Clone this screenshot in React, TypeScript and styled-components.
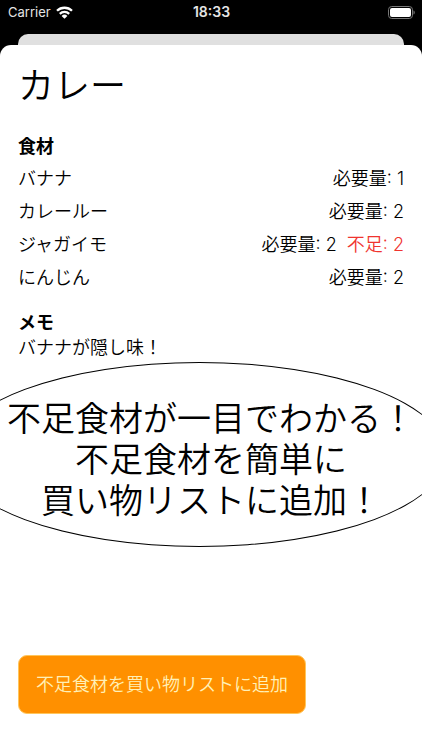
import React from "react";
import styled, { createGlobalStyle } from "styled-components";

const GlobalStyle = createGlobalStyle`
  *, *::before, *::after { box-sizing: border-box; }
  body {
    margin: 0;
    background: #000;
    color: #000;
    font-family: Inter, "Noto Sans CJK JP", sans-serif;
    font-size: 18px;
    font-weight: 350;
    line-height: 25px;
  }
`;

const Screen = styled.div`
  display: flex;
  flex-direction: column;
  min-height: 100vh;
  overflow: hidden;
`;

const StatusBar = styled.header`
  display: grid;
  grid-template-columns: 1fr auto 1fr;
  align-items: center;
  height: 24px;
  padding: 0 7px 0 8px;
  color: #e4e4e4;
  font-size: 13px;
  font-weight: 400;
  line-height: 24px;
`;

const Carrier = styled.div`
  display: flex;
  align-items: center;
  gap: 5px;
`;

const Clock = styled.time`
  font-size: 14px;
  font-weight: 600;
`;

const BatteryIcon = styled.svg`
  justify-self: end;
`;

const BackSheet = styled.div`
  height: 11px;
  margin: 10px 18px 0;
  border-radius: 10px 10px 0 0;
  background: #e0e0e0;
`;

const Sheet = styled.main`
  display: flex;
  flex: 1;
  flex-direction: column;
  padding: 16px 18px 36px;
  border-radius: 11px 11px 0 0;
  background: #fff;
`;

const Title = styled.h1`
  margin: 0;
  font-size: 36px;
  font-weight: 350;
  line-height: 50px;
`;

const Heading = styled.h2<{ $gap: number }>`
  margin: ${({ $gap }) => $gap}px 0 0;
  font-size: 18px;
  font-weight: 700;
`;

const Ingredients = styled.ul`
  display: flex;
  flex-direction: column;
  gap: 8px;
  margin: 7px 0 0;
  padding: 0;
  list-style: none;
`;

const Ingredient = styled.li`
  display: flex;
  justify-content: space-between;
`;

const Amounts = styled.div`
  display: flex;
  gap: 10px;
  font-weight: 350;
`;

const Shortage = styled.span`
  color: #f0342f;
`;

const Memo = styled.p`
  margin: 0;
`;

const Callout = styled.p`
  position: relative;
  z-index: 0;
  margin: 2px -18px 24px;
  padding: 36px 0 26px;
  font-size: 34px;
  line-height: 41px;
  text-align: center;
  white-space: nowrap;

  &::before {
    content: "";
    position: absolute;
    z-index: -1;
    inset: 0 -25px 0 -48px;
    border: 1px solid #000;
    border-radius: 50%;
    background: #fff;
  }
`;

const CalloutLine = styled.span`
  display: block;
`;

const AddButton = styled.button`
  align-self: flex-start;
  margin-top: auto;
  padding: 16px 17px;
  border: 1px solid #ffc65c;
  border-radius: 9px;
  background: #ff9000;
  color: #fff0b8;
  font: inherit;
  cursor: pointer;
`;

const ingredients = [
  { name: "バナナ", required: 1 },
  { name: "カレールー", required: 2 },
  { name: "ジャガイモ", required: 2, missing: 2 },
  { name: "にんじん", required: 2 },
];

export default function App() {
  return (
    <>
      <GlobalStyle />
      <Screen>
        <StatusBar>
          <Carrier>
            <span>Carrier</span>
            <svg width="17" height="13" viewBox="0 0 17 13" aria-hidden="true">
              <g fill="none" stroke="#fff" strokeWidth="2.3">
                <path d="M1 4.8a10.7 10.7 0 0 1 15 0" />
                <path d="M3.8 7.8a6.8 6.8 0 0 1 9.4 0" />
              </g>
              <path d="M5.6 9.9a4.2 4.2 0 0 1 5.8 0L8.5 12.7Z" fill="#fff" />
            </svg>
          </Carrier>
          <Clock>18:33</Clock>
          <BatteryIcon width="27" height="13" viewBox="0 0 27 13" aria-hidden="true">
            <rect x="0.5" y="0.5" width="24" height="12" rx="3.2" fill="none" stroke="#777" />
            <rect x="2" y="2" width="21" height="9" rx="2" fill="#fff" />
            <path d="M25.5 4.5c1.7.7 1.7 3.3 0 4Z" fill="#777" />
          </BatteryIcon>
        </StatusBar>
        <BackSheet />
        <Sheet>
          <Title>カレー</Title>
          <Heading $gap={23}>食材</Heading>
          <Ingredients>
            {ingredients.map(({ name, required, missing }) => (
              <Ingredient key={name}>
                <span>{name}</span>
                <Amounts>
                  <span>必要量: {required}</span>
                  {missing && <Shortage>不足: {missing}</Shortage>}
                </Amounts>
              </Ingredient>
            ))}
          </Ingredients>
          <Heading $gap={20}>メモ</Heading>
          <Memo>バナナが隠し味！</Memo>
          <Callout>
            <CalloutLine>不足食材が一目でわかる！</CalloutLine>
            <CalloutLine>不足食材を簡単に</CalloutLine>
            <CalloutLine>買い物リストに追加！</CalloutLine>
          </Callout>
          <AddButton type="button">不足食材を買い物リストに追加</AddButton>
        </Sheet>
      </Screen>
    </>
  );
}
